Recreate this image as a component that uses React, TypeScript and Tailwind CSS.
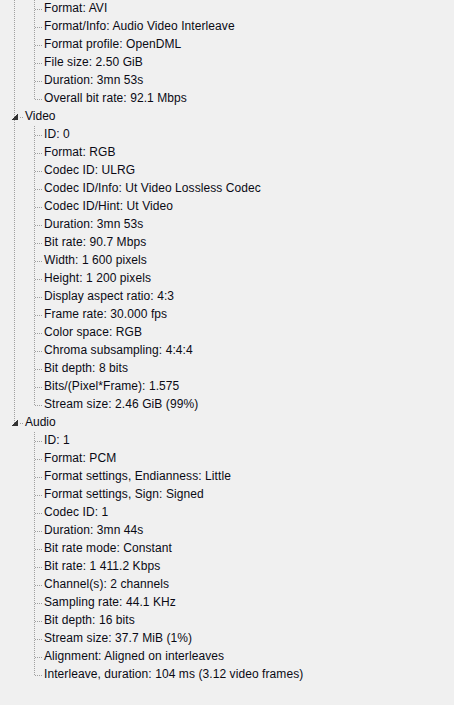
import React from "react";

type Section = { title?: string; items: string[] };

const SECTIONS: Section[] = [
  {
    items: [
      "Format: AVI",
      "Format/Info: Audio Video Interleave",
      "Format profile: OpenDML",
      "File size: 2.50 GiB",
      "Duration: 3mn 53s",
      "Overall bit rate: 92.1 Mbps",
    ],
  },
  {
    title: "Video",
    items: [
      "ID: 0",
      "Format: RGB",
      "Codec ID: ULRG",
      "Codec ID/Info: Ut Video Lossless Codec",
      "Codec ID/Hint: Ut Video",
      "Duration: 3mn 53s",
      "Bit rate: 90.7 Mbps",
      "Width: 1 600 pixels",
      "Height: 1 200 pixels",
      "Display aspect ratio: 4:3",
      "Frame rate: 30.000 fps",
      "Color space: RGB",
      "Chroma subsampling: 4:4:4",
      "Bit depth: 8 bits",
      "Bits/(Pixel*Frame): 1.575",
      "Stream size: 2.46 GiB (99%)",
    ],
  },
  {
    title: "Audio",
    items: [
      "ID: 1",
      "Format: PCM",
      "Format settings, Endianness: Little",
      "Format settings, Sign: Signed",
      "Codec ID: 1",
      "Duration: 3mn 44s",
      "Bit rate mode: Constant",
      "Bit rate: 1 411.2 Kbps",
      "Channel(s): 2 channels",
      "Sampling rate: 44.1 KHz",
      "Bit depth: 16 bits",
      "Stream size: 37.7 MiB (1%)",
      "Alignment: Aligned on interleaves",
      "Interleave, duration: 104 ms (3.12 video frames)",
    ],
  },
];

const DOT = "#a0a0a0";

function GroupRow({ title, last }: { title: string; last: boolean }) {
  return (
    <div className="flex items-center h-[18px]">
      <svg width="25" height="18" className="flex-shrink-0" shapeRendering="crispEdges">
        <line x1="14.5" y1="0" x2="14.5" y2={last ? 9 : 18} stroke={DOT} strokeDasharray="1 1" />
        <line x1="20" y1="9.5" x2="24" y2="9.5" stroke={DOT} strokeDasharray="1 1" />
        <polygon points="18,5.5 18,11.5 12,11.5" fill="#333333" />
      </svg>
      <span className="relative -top-px">{title}</span>
    </div>
  );
}

function LeafRow({ text, last, outer }: { text: string; last: boolean; outer: boolean }) {
  return (
    <div className="flex items-center h-[18px]">
      <svg width="44" height="18" className="flex-shrink-0" shapeRendering="crispEdges">
        {outer && <line x1="14.5" y1="0" x2="14.5" y2="18" stroke={DOT} strokeDasharray="1 1" />}
        <line x1="34.5" y1="0" x2="34.5" y2={last ? 10 : 18} stroke={DOT} strokeDasharray="1 1" />
        <line x1="35" y1="9.5" x2="43" y2="9.5" stroke={DOT} strokeDasharray="1 1" />
      </svg>
      <span className="relative -top-px whitespace-nowrap tracking-[0.08px]">{text}</span>
    </div>
  );
}

export default function App() {
  return (
    <div className="min-h-screen bg-[#f0f0f0] text-[#0a0a14] text-[12px] leading-[18px] font-['Liberation_Sans',Arial,sans-serif] overflow-hidden">
      {SECTIONS.map((s, si) => {
        const lastSection = si === SECTIONS.length - 1;
        return (
          <div key={si}>
            {s.title && <GroupRow title={s.title} last={lastSection} />}
            {s.items.map((it, i) => (
              <LeafRow key={i} text={it} last={i === s.items.length - 1} outer={!lastSection} />
            ))}
          </div>
        );
      })}
    </div>
  );
}
